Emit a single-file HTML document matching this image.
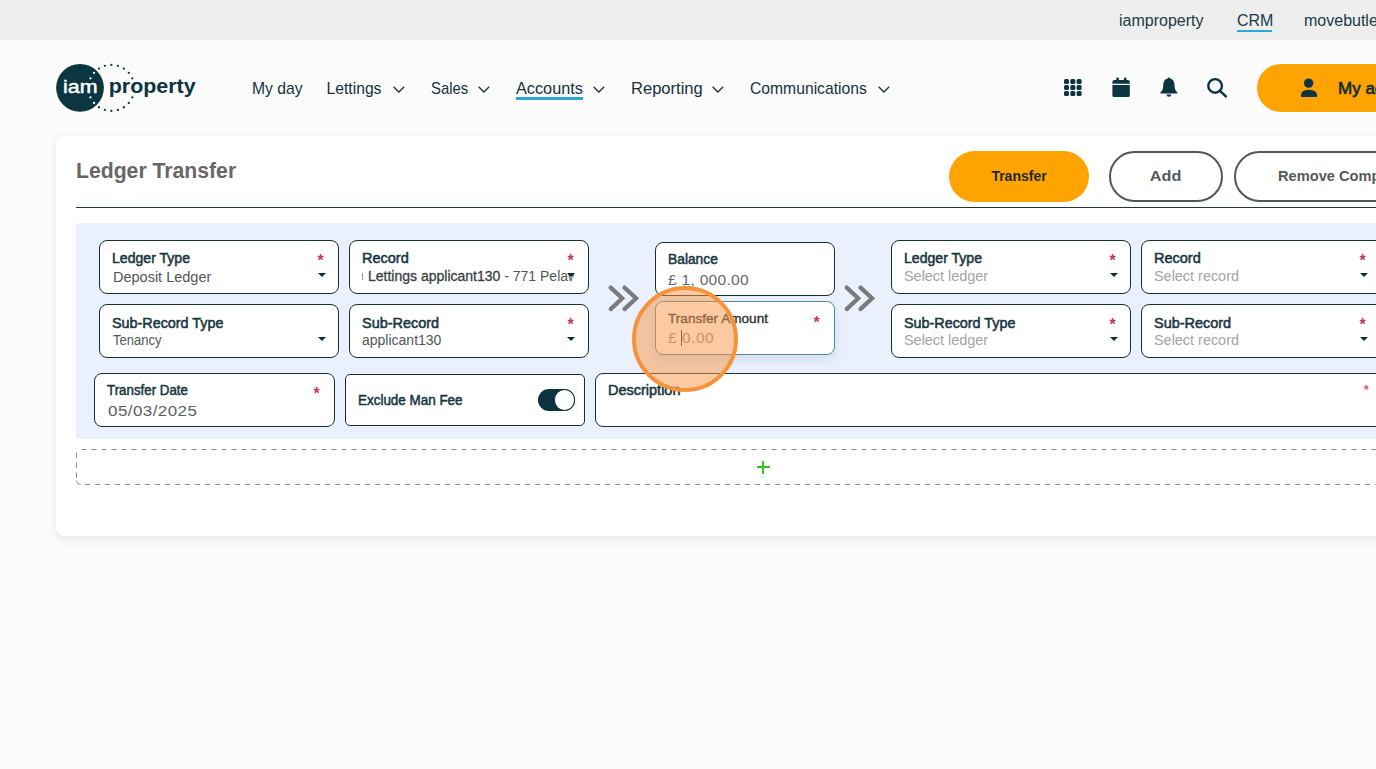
<!DOCTYPE html>
<html><head><meta charset="utf-8">
<style>
*{box-sizing:border-box;margin:0;padding:0}
html,body{width:1376px;height:769px;overflow:hidden;background:#fbfbfb;font-family:"Liberation Sans",sans-serif;color:#123540}
.abs{position:absolute}
#topbar{position:absolute;left:0;top:0;width:1376px;height:40px;background:#eeeeee}
.tl{position:absolute;top:11.8px;font-size:16px;color:#1a3a46;white-space:nowrap;line-height:18px}
.nav{position:absolute;top:80px;transform-origin:0 0;font-size:15.7px;color:#13333f;white-space:nowrap;line-height:18px}
.chev{position:absolute;top:86px;width:12px;height:7px;overflow:visible}
#card{position:absolute;left:56px;top:136px;width:1400px;height:400px;background:#fff;border-radius:8px;box-shadow:0 3px 8px rgba(0,0,0,0.09)}
#panel{position:absolute;left:76px;top:223px;width:1400px;height:215.5px;background:#ebf1fc;border-radius:4px}
.box{position:absolute;background:#fff;border:1.5px solid #17313a;border-radius:8px;height:53.5px}
.lab{position:absolute;font-size:13.8px;font-weight:normal;-webkit-text-stroke:0.5px #17363f;color:#17363f;white-space:nowrap;line-height:15px;transform-origin:0 0}
.val{position:absolute;font-size:14px;color:#505658;white-space:nowrap;line-height:16px;transform-origin:0 0}
.ph{color:#a3a4a6}
.ast{position:absolute;font-size:16px;color:#c73a55;font-weight:bold;line-height:14px;margin-left:0.5px;margin-top:2.5px}
.caret{position:absolute;width:0;height:0;border-left:4px solid transparent;border-right:4px solid transparent;border-top:4.6px solid #0e2b33}
.btn{position:absolute;border-radius:26px;font-weight:bold;font-size:14px;text-align:center;white-space:nowrap}
</style></head><body>
<div id="topbar"></div>
<div class="tl" style="left:1119px">iamproperty</div>
<div class="tl" style="left:1237px">CRM</div>
<div class="abs" style="left:1237px;top:30px;width:35px;height:2px;background:#2ea6d6"></div>
<div class="tl" style="left:1304px">movebutler</div>

<!-- logo -->
<svg class="abs" style="left:50px;top:58px" width="160" height="60" viewBox="50 58 160 60">
  <g fill="#0c3542"><circle cx="111.40" cy="64.90" r="1.15"/><circle cx="117.88" cy="65.83" r="1.15"/><circle cx="123.83" cy="68.55" r="1.15"/><circle cx="128.78" cy="72.84" r="1.15"/><circle cx="132.32" cy="78.35" r="1.15"/><circle cx="134.17" cy="84.63" r="1.15"/><circle cx="134.17" cy="91.17" r="1.15"/><circle cx="132.32" cy="97.45" r="1.15"/><circle cx="128.78" cy="102.96" r="1.15"/><circle cx="123.83" cy="107.25" r="1.15"/><circle cx="117.88" cy="109.97" r="1.15"/><circle cx="111.40" cy="110.90" r="1.15"/><circle cx="104.92" cy="109.97" r="1.15"/><circle cx="98.97" cy="107.25" r="1.15"/><circle cx="94.02" cy="102.96" r="1.15"/><circle cx="90.48" cy="97.45" r="1.15"/><circle cx="88.63" cy="91.17" r="1.15"/><circle cx="88.63" cy="84.63" r="1.15"/><circle cx="90.48" cy="78.35" r="1.15"/><circle cx="94.02" cy="72.84" r="1.15"/><circle cx="98.97" cy="68.55" r="1.15"/><circle cx="104.92" cy="65.83" r="1.15"/></g>
  <circle cx="80" cy="87.8" r="23.9" fill="#0c3542"/>
  <g fill="#fff"><circle cx="94.02" cy="102.96" r="1.15"/><circle cx="90.48" cy="97.45" r="1.15"/><circle cx="88.63" cy="91.17" r="1.15"/><circle cx="88.63" cy="84.63" r="1.15"/><circle cx="90.48" cy="78.35" r="1.15"/><circle cx="94.02" cy="72.84" r="1.15"/></g>
  <text x="63" y="92.7" font-family="Liberation Sans" font-size="18" fill="#fff" stroke="#fff" stroke-width="0.45" textLength="34.5" lengthAdjust="spacingAndGlyphs">iam</text>
  <text x="108.7" y="93.2" font-family="Liberation Sans" font-weight="bold" font-size="19.5" fill="#0c3542" textLength="87" lengthAdjust="spacingAndGlyphs">property</text>
</svg>

<div class="nav" style="left:252px">My day</div>
<div class="nav" style="left:326.5px">Lettings</div>
<svg class="chev" style="left:393px" viewBox="0 0 12 7"><path d="M0.6 0.8 L5.9 6 L11.2 0.8" fill="none" stroke="#13333f" stroke-width="1.25"/></svg>
<div class="nav" style="left:431px;transform:scaleX(0.945)">Sales</div>
<svg class="chev" style="left:478px" viewBox="0 0 12 7"><path d="M0.6 0.8 L5.9 6 L11.2 0.8" fill="none" stroke="#13333f" stroke-width="1.25"/></svg>
<div class="nav" style="left:516px;transform:scaleX(1.037)">Accounts</div>
<div class="abs" style="left:516px;top:97px;width:67px;height:2.5px;background:#2ea6d6"></div>
<svg class="chev" style="left:593px" viewBox="0 0 12 7"><path d="M0.6 0.8 L5.9 6 L11.2 0.8" fill="none" stroke="#13333f" stroke-width="1.25"/></svg>
<div class="nav" style="left:630.5px;transform:scaleX(1.055)">Reporting</div>
<svg class="chev" style="left:712px" viewBox="0 0 12 7"><path d="M0.6 0.8 L5.9 6 L11.2 0.8" fill="none" stroke="#13333f" stroke-width="1.25"/></svg>
<div class="nav" style="left:750px">Communications</div>
<svg class="chev" style="left:878px" viewBox="0 0 12 7"><path d="M0.6 0.8 L5.9 6 L11.2 0.8" fill="none" stroke="#13333f" stroke-width="1.25"/></svg>

<!-- icons -->
<svg class="abs" style="left:1064px;top:79px" width="18" height="17" viewBox="0 0 18 17" fill="#0c3542">
  <rect x="0" y="0" width="5" height="5" rx="1.5"/><rect x="6.3" y="0" width="5" height="5" rx="1.5"/><rect x="12.6" y="0" width="5" height="5" rx="1.5"/>
  <rect x="0" y="6" width="5" height="5" rx="1.5"/><rect x="6.3" y="6" width="5" height="5" rx="1.5"/><rect x="12.6" y="6" width="5" height="5" rx="1.5"/>
  <rect x="0" y="12" width="5" height="5" rx="1.5"/><rect x="6.3" y="12" width="5" height="5" rx="1.5"/><rect x="12.6" y="12" width="5" height="5" rx="1.5"/>
</svg>
<svg class="abs" style="left:1112px;top:77px" width="19" height="21" viewBox="0 0 19 21" fill="#0c3542">
  <rect x="4.3" y="0.5" width="2.6" height="4" rx="1.2"/><rect x="11.9" y="0.5" width="2.6" height="4" rx="1.2"/>
  <path d="M0.4 5 Q0.4 3 2.4 3 H15.8 Q17.8 3 17.8 5 V6.8 H0.4Z"/>
  <path d="M0.4 8 H17.8 V18.5 Q17.8 20 16.3 20 H1.9 Q0.4 20 0.4 18.5Z"/>
</svg>
<svg class="abs" style="left:1160px;top:77px" width="19" height="21" viewBox="0 0 19 21" fill="#0c3542">
  <circle cx="8.9" cy="1.6" r="1.2"/>
  <path d="M8.9 1.5 C4.5 1.5 3.3 5 3.2 9 C3.1 12.5 2.2 14 0.4 15.2 Q0 16.4 1.2 16.5 H16.6 Q17.8 16.4 17.4 15.2 C15.6 14 14.7 12.5 14.6 9 C14.5 5 13.3 1.5 8.9 1.5Z"/>
  <path d="M6.4 17.6 H11.4 Q11 19.8 8.9 19.8 Q6.8 19.8 6.4 17.6Z"/>
</svg>
<svg class="abs" style="left:1206px;top:77px" width="22" height="21" viewBox="0 0 22 21">
  <circle cx="9.1" cy="8.9" r="6.8" fill="none" stroke="#0c3542" stroke-width="2.4"/>
  <path d="M14 13.8 L19.8 19.4" stroke="#0c3542" stroke-width="2.5" stroke-linecap="round"/>
</svg>
<div class="btn" style="left:1257px;top:64px;width:200px;height:48px;background:#ffa300;border-radius:24px"></div>
<svg class="abs" style="left:1300px;top:78px" width="18" height="20" viewBox="0 0 18 20" fill="#0c3542">
  <circle cx="8.6" cy="5.1" r="4.7"/>
  <path d="M0.8 18 Q0.8 11.8 8.9 11.8 Q17.2 11.8 17.2 18 Q17.2 19.1 16.2 19.1 H1.8 Q0.8 19.1 0.8 18Z"/>
</svg>
<div class="abs" style="left:1338px;top:79.5px;font-size:17px;color:#0c2a33;white-space:nowrap;line-height:18px;-webkit-text-stroke:0.6px #0c2a33">My account</div>

<!-- card -->
<div id="card"></div>
<div class="abs" style="left:76px;top:160px;font-size:21.2px;font-weight:bold;color:#67676a;white-space:nowrap;line-height:22px">Ledger Transfer</div>
<div class="abs" style="left:76px;top:207px;width:1300px;height:1.2px;background:#24363b"></div>
<div class="btn" style="left:949px;top:151px;width:140px;height:51px;background:#ffa300;color:#1b2a26;line-height:51px">Transfer</div>
<div class="btn" style="left:1109px;top:151px;width:114px;height:51px;border:2px solid #545658;color:#555a5c;line-height:47px"><span style="display:inline-block;transform:scaleX(1.16)">Add</span></div>
<div class="btn" style="left:1234px;top:151px;width:200px;height:51px;border:2px solid #545658;color:#555a5c;line-height:47px;text-align:left;padding-left:42px"><span style="display:inline-block;transform:scaleX(1.045);transform-origin:0 0">Remove Component</span></div>

<div id="panel"></div>

<!-- left group -->
<div class="box" style="left:99px;top:240px;width:240px"></div>
<div class="lab" style="left:112px;top:251px;transform:scaleX(1.02)">Ledger Type</div>
<div class="val" style="left:112.5px;top:268.5px;transform:scaleX(1.035);transform-origin:0 0">Deposit Ledger</div>
<div class="ast" style="left:317px;top:251px">*</div>
<div class="caret" style="left:318px;top:273px"></div>

<div class="box" style="left:349px;top:240px;width:240px"></div>
<div class="lab" style="left:362px;top:251px;transform:scaleX(1.05)">Record</div>
<div class="abs" style="left:362px;top:273px;width:1px;height:7px;background:#9a9a9a"></div>
<div class="val" style="left:368px;top:268px;width:206px;overflow:hidden"><span style="color:#3a4044;-webkit-text-stroke:0.3px #3a4044">Lettings applicant130</span> - 771 Pelaw Road</div>
<div class="ast" style="left:567px;top:251px">*</div>
<div class="caret" style="left:567px;top:273px"></div>

<div class="box" style="left:99px;top:304px;width:240px"></div>
<div class="lab" style="left:112px;top:316px;transform:scaleX(1.04)">Sub-Record Type</div>
<div class="val" style="left:113px;top:332px;transform:scaleX(0.93);transform-origin:0 0">Tenancy</div>
<div class="caret" style="left:318px;top:337px"></div>

<div class="box" style="left:349px;top:304px;width:240px"></div>
<div class="lab" style="left:362px;top:316px;transform:scaleX(1.048)">Sub-Record</div>
<div class="val" style="left:362px;top:332px">applicant130</div>
<div class="ast" style="left:567px;top:315px">*</div>
<div class="caret" style="left:567px;top:337px"></div>

<!-- arrows -->
<svg class="abs" style="left:606px;top:283px" width="36" height="31" viewBox="0 0 36 31">
  <path d="M4.7 4.6 L16.2 15.3 L4.7 26.1 M18.5 4.6 L30.1 15.3 L18.5 26.1" fill="none" stroke="#7a7a7b" stroke-width="4.2" stroke-linecap="round" stroke-linejoin="miter"/>
</svg>
<svg class="abs" style="left:842px;top:283px" width="36" height="31" viewBox="0 0 36 31">
  <path d="M4.7 4.6 L16.2 15.3 L4.7 26.1 M18.5 4.6 L30.1 15.3 L18.5 26.1" fill="none" stroke="#7a7a7b" stroke-width="4.2" stroke-linecap="round" stroke-linejoin="miter"/>
</svg>

<!-- middle -->
<div class="box" style="left:655px;top:242px;width:180px"></div>
<div class="lab" style="left:668px;top:252px">Balance</div>
<div class="val" style="left:668px;top:271.5px;font-size:15.5px;letter-spacing:0.3px;color:#656869">£ 1, 000.00</div>
<div class="box" style="left:655px;top:301px;width:180px;border-color:#4b8ba3;box-shadow:0 5px 12px rgba(60,80,120,0.13)"></div>
<div class="lab" style="left:668px;top:311px;color:#2f3638;font-weight:normal;-webkit-text-stroke:0.4px #2f3638;font-size:13.6px">Transfer Amount</div>
<div class="val ph" style="left:668px;top:330px;font-size:15.5px;color:#8e9193">£</div><div class="val ph" style="left:682px;top:330px;font-size:15.5px;letter-spacing:0.5px;color:#8e9193">0.00</div>
<div class="abs" style="left:681px;top:330px;width:1px;height:16px;background:#333"></div>
<div class="ast" style="left:813px;top:313px">*</div>

<!-- right group -->
<div class="box" style="left:891px;top:240px;width:240px"></div>
<div class="lab" style="left:904px;top:251px;transform:scaleX(1.02)">Ledger Type</div>
<div class="val ph" style="left:904px;top:268px;transform:scaleX(1.03)">Select ledger</div>
<div class="ast" style="left:1109px;top:251px">*</div>
<div class="caret" style="left:1110px;top:273px"></div>

<div class="box" style="left:1141px;top:240px;width:260px"></div>
<div class="lab" style="left:1154px;top:251px;transform:scaleX(1.05)">Record</div>
<div class="val ph" style="left:1154px;top:268px;transform:scaleX(1.03)">Select record</div>
<div class="ast" style="left:1359px;top:251px">*</div>
<div class="caret" style="left:1360px;top:273px"></div>

<div class="box" style="left:891px;top:304px;width:240px"></div>
<div class="lab" style="left:904px;top:316px;transform:scaleX(1.04)">Sub-Record Type</div>
<div class="val ph" style="left:904px;top:332px;transform:scaleX(1.03)">Select ledger</div>
<div class="ast" style="left:1109px;top:315px">*</div>
<div class="caret" style="left:1110px;top:337px"></div>

<div class="box" style="left:1141px;top:304px;width:260px"></div>
<div class="lab" style="left:1154px;top:316px;transform:scaleX(1.048)">Sub-Record</div>
<div class="val ph" style="left:1154px;top:332px;transform:scaleX(1.03)">Select record</div>
<div class="ast" style="left:1359px;top:315px">*</div>
<div class="caret" style="left:1360px;top:337px"></div>

<!-- row 3 -->
<div class="box" style="left:94px;top:373px;width:241px;height:54px"></div>
<div class="lab" style="left:107px;top:383px;transform:scaleX(0.965)">Transfer Date</div>
<div class="val" style="left:107.5px;top:403px;font-size:14.8px;letter-spacing:0.4px;color:#5c6062;transform:scaleX(1.145)">05/03/2025</div>
<div class="ast" style="left:313px;top:384px">*</div>

<div class="box" style="left:345px;top:374px;width:240px;height:52px;border-radius:5px"></div>
<div class="lab" style="left:358px;top:393px;transform:scaleX(0.974)">Exclude Man Fee</div>
<div class="abs" style="left:538px;top:389px;width:37px;height:22px;border-radius:11px;background:#0b3440"></div>
<div class="abs" style="left:553.5px;top:389px;width:21.8px;height:22px;border-radius:50%;background:#fff;border:1.1px solid #0b3440"></div>

<div class="box" style="left:595px;top:373px;width:900px;height:54px"></div>
<div class="lab" style="left:608px;top:383px;transform:scaleX(1.05)">Description</div>
<div class="ast" style="left:1363.5px;top:380px;font-size:12px;color:#d4566c">*</div>

<!-- dashed add -->
<svg class="abs" style="left:70px;top:445px" width="1306" height="45" viewBox="70 445 1306 45">
<path d="M76.5 449.5 H1376" stroke="#8f8f8f" stroke-width="1" stroke-dasharray="5 5" stroke-dashoffset="-5" fill="none"/>
<path d="M81 484.5 H1376" stroke="#8f8f8f" stroke-width="1" stroke-dasharray="5 5" stroke-dashoffset="-4" fill="none"/>
<path d="M76.5 452.5 V479.5" stroke="#8f8f8f" stroke-width="1" stroke-dasharray="5.5 4.5" fill="none"/>
<path d="M76.5 480.5 Q76.5 484.5 80.5 484.5" stroke="#8f8f8f" stroke-width="1" fill="none"/>
</svg>
<div class="abs" style="left:757px;top:466px;width:12.5px;height:2px;background:#3cbd2b"></div><div class="abs" style="left:762.2px;top:461px;width:2px;height:12.5px;background:#3cbd2b"></div>

<!-- orange click indicator -->
<div class="abs" style="left:632px;top:286px;width:106px;height:106px;border-radius:50%;background:rgba(248,150,70,0.5);border:4.5px solid #f6923a"></div>


</body></html>
